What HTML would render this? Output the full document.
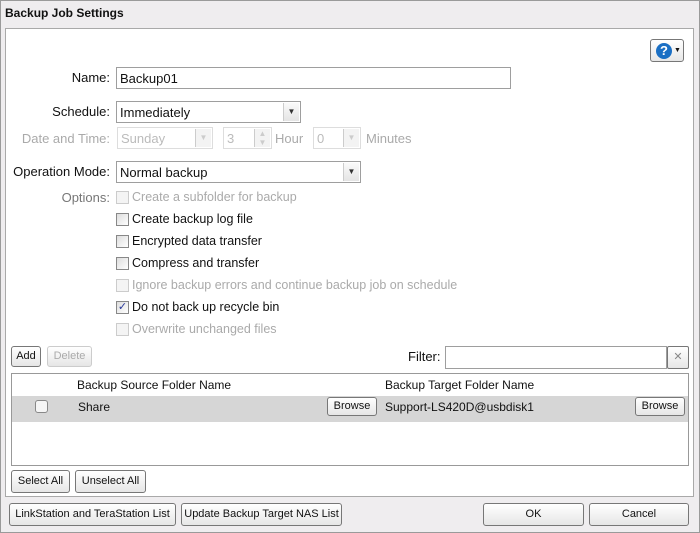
<!DOCTYPE html>
<html><head><style>
*{box-sizing:border-box;margin:0;padding:0}
body{width:700px;height:533px;background:#efedef;font-family:"Liberation Sans",sans-serif;font-size:12px;color:#111;position:relative;overflow:hidden}
.a{position:absolute;white-space:nowrap}
.panel{position:absolute;left:5px;top:28px;width:689px;height:469px;background:#fff;border:1px solid #a9a9a9}
.inp{position:absolute;background:#fff;border:1px solid #9e9e9e;height:22px;padding:3px 3px;font-size:13px}
.dis{border-color:#ddd;color:#bbb}
.arr{position:absolute;right:1px;top:1px;bottom:1px;width:16px;background:linear-gradient(#fafafa,#e4e4e4);border-left:1px solid #ccc;font-size:8px;text-align:center;line-height:18px;color:#333}
.lbl{position:absolute;text-align:right;width:110px;left:0;font-size:13px}
.cb{position:absolute;width:13px;height:13px;border:1px solid #888;background:linear-gradient(135deg,#ddd,#fff)}
.cbd{border-color:#ccc;background:#f4f4f4}
.opt{position:absolute;left:132px;font-size:12.5px}
.btn{position:absolute;border:1px solid #777;border-radius:3px;background:linear-gradient(#fff,#e6e6e6);font-size:11px;text-align:center}
</style></head><body>
<div class="a" style="left:0;top:0;width:700px;height:533px;border:1px solid #9a9a9a"></div>
<div class="a" style="left:5px;top:6px;font-weight:bold;font-size:12px">Backup Job Settings</div>
<div class="panel"></div>
<div class="btn" style="left:650px;top:39px;width:34px;height:23px;border-radius:3px">
<div class="a" style="left:5px;top:3px;width:16px;height:16px;border-radius:50%;background:#1a6fc4;color:#fff;font-weight:bold;font-size:13px;line-height:16px;text-align:center">?</div>
<div class="a" style="left:23px;top:3px;font-size:7px;line-height:16px">▼</div></div>

<div class="lbl" style="top:70px">Name:</div>
<div class="inp" style="left:116px;top:67px;width:395px">Backup01</div>
<div class="lbl" style="top:104px">Schedule:</div>
<div class="inp" style="left:116px;top:101px;width:185px">Immediately<div class="arr">▼</div></div>
<div class="lbl" style="top:131px;color:#aaa">Date and Time:</div>
<div class="inp dis" style="left:117px;top:127px;width:96px">Sunday<div class="arr" style="color:#ccc;background:#f3f3f3">▼</div></div>
<div class="inp dis" style="left:223px;top:127px;width:49px">3<div class="arr" style="color:#ccc;background:#f3f3f3;line-height:9px">▲<br>▼</div></div>
<div class="a" style="left:275px;top:131px;color:#aaa;font-size:13px">Hour</div>
<div class="inp dis" style="left:313px;top:127px;width:48px">0<div class="arr" style="color:#ccc;background:#f3f3f3">▼</div></div>
<div class="a" style="left:366px;top:131px;color:#aaa;font-size:13px">Minutes</div>
<div class="lbl" style="top:164px">Operation Mode:</div>
<div class="inp" style="left:116px;top:161px;width:245px">Normal backup<div class="arr">▼</div></div>
<div class="lbl" style="top:190px;color:#777">Options:</div>

<div class="cb cbd" style="left:116px;top:191px"></div><div class="opt" style="top:190px;color:#aaa">Create a subfolder for backup</div>
<div class="cb" style="left:116px;top:213px"></div><div class="opt" style="top:212px">Create backup log file</div>
<div class="cb" style="left:116px;top:235px"></div><div class="opt" style="top:234px">Encrypted data transfer</div>
<div class="cb" style="left:116px;top:257px"></div><div class="opt" style="top:256px">Compress and transfer</div>
<div class="cb cbd" style="left:116px;top:279px"></div><div class="opt" style="top:278px;color:#aaa">Ignore backup errors and continue backup job on schedule</div>
<div class="cb" style="left:116px;top:301px;font-size:11px;line-height:11px;color:#2a3a9a;text-align:center">✓</div><div class="opt" style="top:300px">Do not back up recycle bin</div>
<div class="cb cbd" style="left:116px;top:323px"></div><div class="opt" style="top:322px;color:#aaa">Overwrite unchanged files</div>

<div class="btn" style="left:11px;top:346px;width:30px;height:21px;line-height:19px">Add</div>
<div class="btn" style="left:47px;top:346px;width:45px;height:21px;line-height:19px;color:#aaa;border-color:#ccc">Delete</div>
<div class="a" style="left:408px;top:349px;font-size:13px">Filter:</div>
<div class="inp" style="left:445px;top:346px;width:222px;height:23px"></div>
<div class="btn" style="left:667px;top:346px;width:22px;height:23px;line-height:21px;color:#888;border-radius:2px">✕</div>

<div class="a" style="left:11px;top:373px;width:678px;height:93px;border:1px solid #999;background:#fff"></div>
<div class="a" style="left:77px;top:378px">Backup Source Folder Name</div>
<div class="a" style="left:385px;top:378px">Backup Target Folder Name</div>
<div class="a" style="left:12px;top:396px;width:676px;height:26px;background:#d6d6d6"></div>
<div class="cb" style="left:35px;top:400px;border-radius:3px;background:#f5f5f5"></div>
<div class="a" style="left:78px;top:400px">Share</div>
<div class="btn" style="left:327px;top:397px;width:50px;height:19px;line-height:17px">Browse</div>
<div class="a" style="left:385px;top:400px">Support-LS420D@usbdisk1</div>
<div class="btn" style="left:635px;top:397px;width:50px;height:19px;line-height:17px">Browse</div>

<div class="btn" style="left:11px;top:470px;width:59px;height:23px;line-height:21px">Select All</div>
<div class="btn" style="left:75px;top:470px;width:71px;height:23px;line-height:21px">Unselect All</div>

<div class="btn" style="left:9px;top:503px;width:167px;height:23px;line-height:21px">LinkStation and TeraStation List</div>
<div class="btn" style="left:181px;top:503px;width:161px;height:23px;line-height:21px">Update Backup Target NAS List</div>
<div class="btn" style="left:483px;top:503px;width:101px;height:23px;line-height:21px">OK</div>
<div class="btn" style="left:589px;top:503px;width:100px;height:23px;line-height:21px">Cancel</div>
</body></html>
